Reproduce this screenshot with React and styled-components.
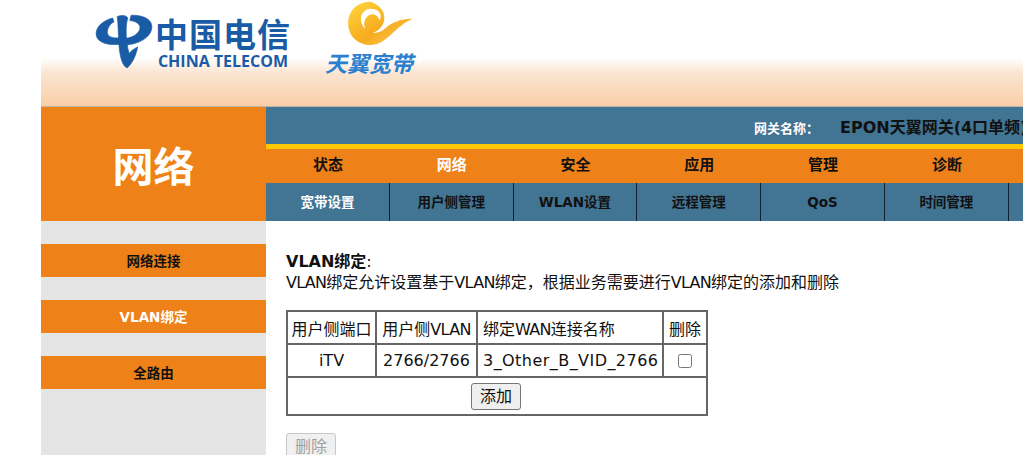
import React from 'react'
import styled, { createGlobalStyle } from 'styled-components'

const cjk = '"Noto Sans CJK SC", sans-serif'
const mixed = '"DejaVu Sans", "Noto Sans CJK SC", sans-serif'

const Global = createGlobalStyle`
  html, body {
    margin: 0;
    padding: 0;
    height: 100%;
    overflow: hidden;
    background: #fff;
  }
`

const Page = styled.div`
  width: 982px;
  height: 455px;
  margin-left: 41px;
  font-family: ${mixed};
  overflow: hidden;
`

const Header = styled.header`
  height: 107px;
  display: flex;
  align-items: flex-start;
  padding-left: 54px;
  gap: 34px;
  background: linear-gradient(#fff 0, #fff 58px, #fbe6d3 72px, #f9cda6 107px);
`

const TelecomLogo = styled.div`
  display: grid;
  grid-template-columns: 58px auto;
  column-gap: 2px;
  margin-top: 13px;
  color: #1a5ba6;
`

const LogoWords = styled.div`
  display: flex;
  flex-direction: column;
  align-items: center;
`

const LogoCn = styled.span`
  font: 700 33px/40px ${cjk};
  letter-spacing: 1px;
  white-space: nowrap;
`

const LogoEn = styled.span`
  font: 700 16px/16px "Open Sans", sans-serif;
  white-space: nowrap;
`

const BroadbandLogo = styled.div`
  display: flex;
  flex-direction: column;
  align-items: flex-start;
`

const SwirlWrap = styled.div`
  margin-left: 20px;
  height: 49px;
`

const BroadbandText = styled.span`
  font: 700 22px/26px ${cjk};
  color: #2a7fd0;
  font-style: italic;
  white-space: nowrap;
`

const Top = styled.div`
  display: flex;
  height: 114px;
  border-top: 1px solid #bdb5ad;
  margin-top: -1px;
`

const SectionTitle = styled.div`
  width: 225px;
  flex: none;
  display: flex;
  align-items: center;
  justify-content: center;
  background: #ef8119;
  color: #fff;
  font: 700 41px/1 ${cjk};
`

const Bars = styled.div`
  flex: 1;
  min-width: 0;
  display: flex;
  flex-direction: column;
`

const GatewayBar = styled.div`
  height: 37px;
  box-sizing: border-box;
  background: #427494;
  display: flex;
  align-items: center;
  padding: 5px 0 0 488px;
  white-space: nowrap;
`

const GatewayLabel = styled.span`
  color: #fff;
  font: 700 13px/1 ${mixed};
  width: 86px;
  flex: none;
`

const GatewayName = styled.span`
  color: #111;
  font: 700 16px/1 ${mixed};
  flex: none;
`

const Stripe = styled.div`
  height: 5px;
  background: #ffc800;
`

const MainNav = styled.nav`
  height: 34px;
  background: #ef8119;
  display: flex;
`

const MainItem = styled.a`
  width: 123.8px;
  flex: none;
  text-align: center;
  font: 700 15px/30px ${cjk};
  color: ${(p) => (p.$active ? '#fff' : '#111')};
`

const SubNav = styled.nav`
  height: 38px;
  background: #427494;
  display: flex;
`

const SubItem = styled.a`
  width: 123.8px;
  box-sizing: border-box;
  flex: none;
  text-align: center;
  border-right: 1px solid #10222e;
  font: 700 13.5px/38px ${mixed};
  color: ${(p) => (p.$active ? '#fff' : '#111')};
`

const Body = styled.div`
  display: flex;
  height: 234px;
`

const Side = styled.aside`
  width: 225px;
  flex: none;
  background: #e5e5e5;
  padding-top: 23px;
  display: flex;
  flex-direction: column;
  gap: 23px;
`

const SideItem = styled.a`
  height: 33px;
  background: #ef8119;
  text-align: center;
  font: 700 13.5px/34px ${mixed};
  color: ${(p) => (p.$active ? '#fff' : '#111')};
`

const Content = styled.main`
  padding: 30px 0 0 20px;
  font-size: 16px;
  color: #111;
`

const Title = styled.div`
  line-height: 21px;
  font-weight: 700;
  span {
    font-weight: 400;
  }
`

const Desc = styled.div`
  line-height: 22px;
  white-space: nowrap;
`

const Latin = styled.span`
  letter-spacing: -0.7px;
`

const Table = styled.table`
  border-collapse: collapse;
  margin: 16px 0 0 0;
  width: 420px;
  table-layout: fixed;
  border: 2px solid #666;
`

const Th = styled.td`
  border: 2px solid #666;
  height: 31px;
  padding: 0 0 0 ${(p) => (p.$left ? '5px' : '0')};
  text-align: ${(p) => (p.$left ? 'left' : 'center')};
  white-space: nowrap;
  overflow: hidden;
  letter-spacing: ${(p) => (p.$wide ? '0.45px' : '0')};
`

const AddRow = styled.td`
  border: 2px solid #666;
  height: 36px;
  padding: 0 2px 0 0;
  text-align: center;
`

const Btn = styled.button`
  font: 400 16px/19px ${mixed};
  height: 27px;
  padding: 0 8px;
  box-sizing: border-box;
  border: 1px solid #767676;
  border-radius: 3px;
  background: #efefef;
  color: #111;
  display: inline-block;
  vertical-align: middle;
  &:disabled {
    border-color: #c8c8c8;
    color: #a0a0a0;
    background: #f0f0f0;
  }
`

const DeleteBtn = styled(Btn)`
  display: block;
  margin-top: 17px;
`

const Check = styled.input`
  margin: 0 0 2px;
  width: 14px;
  height: 14px;
  vertical-align: middle;
`

const TelecomMark = () => (
  <svg width="58" height="56" viewBox="15 35 175 170">
    <g fill="#1a5ba6" stroke="#1a5ba6" strokeWidth="2" strokeLinejoin="round">
      <path d="M68 50C38 58 16 78 18 100C20 124 52 134 88 130L88 110C68 113 52 106 52 94C52 80 60 68 72 62Z" />
      <path d="M124 42C162 40 190 56 187 80C184 110 146 130 108 132L108 112C130 110 150 96 151 80C152 68 138 60 120 58Z" />
      <path d="M82 46C96 40 110 42 114 50C106 75 108 120 118 158C124 150 130 145 144 138C140 160 130 186 112 202C98 196 90 170 87 130C85 100 85 70 82 46Z" />
    </g>
  </svg>
)

const Swirl = () => (
  <svg width="70" height="48" viewBox="70 0 215 146">
    <defs>
      <linearGradient id="sw" x1="0" y1="0" x2="1" y2="1">
        <stop offset="0" stopColor="#ffd83f" />
        <stop offset="0.55" stopColor="#f7ab1e" />
        <stop offset="1" stopColor="#fdd060" />
      </linearGradient>
    </defs>
    <path
      fill="url(#sw)"
      d="M150 5C105 5 78 35 80 75C82 120 125 145 165 135C205 125 225 80 278 57C245 55 215 68 195 85C185 95 170 102 155 100C195 90 212 30 150 5Z"
    />
    <path
      fill="#fff"
      d="M132 88C106 60 122 24 152 26C176 28 186 46 176 62C172 46 156 38 144 46C130 54 126 70 132 88Z"
    />
  </svg>
)

const mainItems = ['状态', '网络', '安全', '应用', '管理', '诊断']
const subItems = ['宽带设置', '用户侧管理', 'WLAN设置', '远程管理', 'QoS', '时间管理']
const sideItems = ['网络连接', 'VLAN绑定', '全路由']

export default function App() {
  return (
    <Page>
      <Global />
      <Header>
        <TelecomLogo>
          <TelecomMark />
          <LogoWords>
            <LogoCn>中国电信</LogoCn>
            <LogoEn>CHINA TELECOM</LogoEn>
          </LogoWords>
        </TelecomLogo>
        <BroadbandLogo>
          <SwirlWrap><Swirl /></SwirlWrap>
          <BroadbandText>天翼宽带</BroadbandText>
        </BroadbandLogo>
      </Header>
      <Top>
        <SectionTitle>网络</SectionTitle>
        <Bars>
          <GatewayBar>
            <GatewayLabel>{'网关名称\uFF1A'}</GatewayLabel>
            <GatewayName>EPON天翼网关(4口单频)</GatewayName>
          </GatewayBar>
          <Stripe />
          <MainNav>
            {mainItems.map((item) => (
              <MainItem key={item} $active={item === '网络'}>{item}</MainItem>
            ))}
          </MainNav>
          <SubNav>
            {subItems.map((item) => (
              <SubItem key={item} $active={item === '宽带设置'}>{item}</SubItem>
            ))}
          </SubNav>
        </Bars>
      </Top>
      <Body>
        <Side>
          {sideItems.map((item) => (
            <SideItem key={item} $active={item === 'VLAN绑定'}>{item}</SideItem>
          ))}
        </Side>
        <Content>
          <Title>VLAN绑定<span>:</span></Title>
          <Desc>
            <Latin>VLAN</Latin>绑定允许设置基于<Latin>VLAN</Latin>{'绑定\uFF0C根据业务需要进行'}<Latin>VLAN</Latin>绑定的添加和删除
          </Desc>
          <Table>
            <colgroup>
              <col style={{ width: 89 }} />
              <col style={{ width: 101 }} />
              <col style={{ width: 186 }} />
              <col style={{ width: 44 }} />
            </colgroup>
            <tbody>
              <tr>
                <Th>用户侧端口</Th>
                <Th>用户侧<Latin>VLAN</Latin></Th>
                <Th $left>绑定<Latin>WAN</Latin>连接名称</Th>
                <Th>删除</Th>
              </tr>
              <tr>
                <Th>iTV</Th>
                <Th>2766/2766</Th>
                <Th $left $wide>3_Other_B_VID_2766</Th>
                <Th><Check type="checkbox" /></Th>
              </tr>
              <tr>
                <AddRow colSpan={4}><Btn>添加</Btn></AddRow>
              </tr>
            </tbody>
          </Table>
          <DeleteBtn disabled>删除</DeleteBtn>
        </Content>
      </Body>
    </Page>
  )
}
